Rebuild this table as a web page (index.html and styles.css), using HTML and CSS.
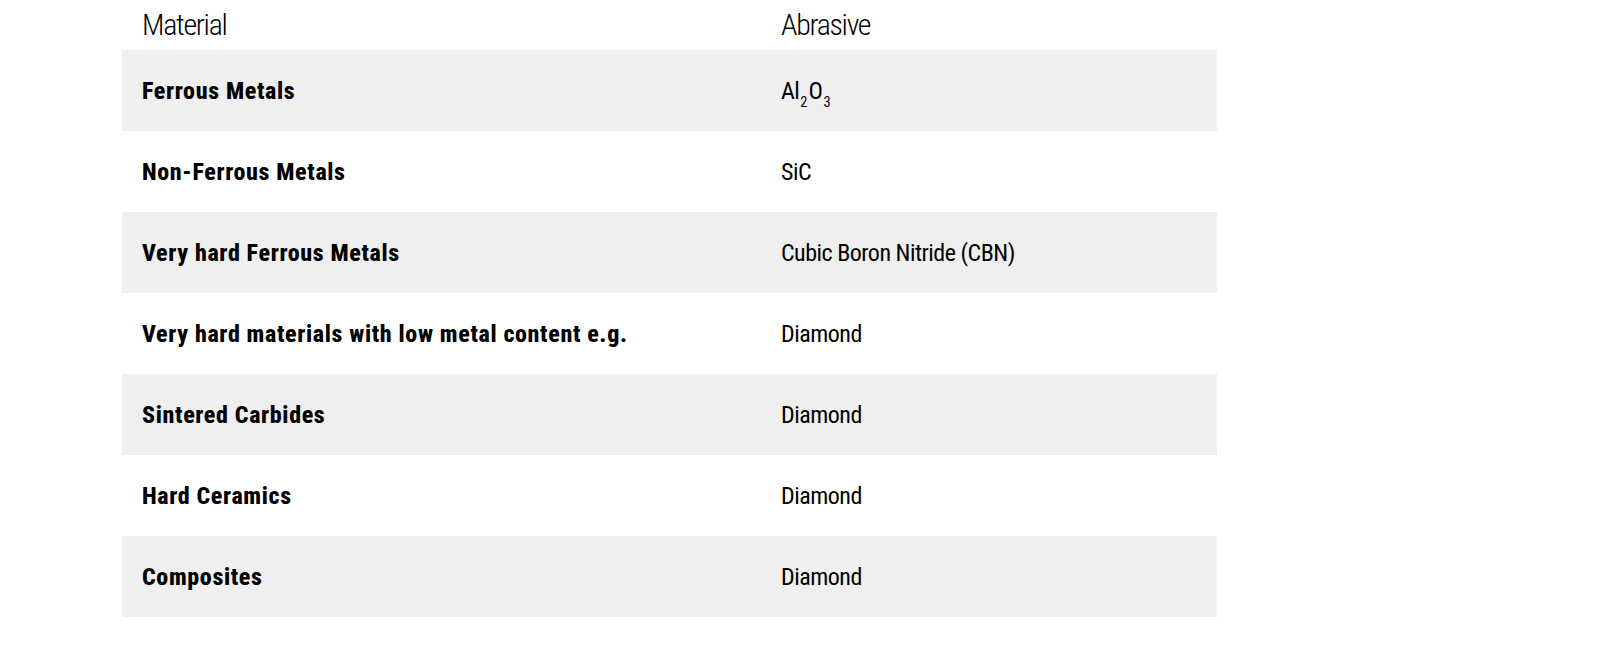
FILE: index.html
```html
<!DOCTYPE html>
<html lang="en">
<head>
<meta charset="utf-8">
<title>Materials and Abrasives</title>
<link rel="stylesheet" href="styles.css">
</head>
<body>
<table class="grid">
  <thead>
    <tr>
      <th class="col-mat">Material</th>
      <th class="col-abr">Abrasive</th>
    </tr>
  </thead>
  <tbody>
    <tr><td class="mat">Ferrous Metals</td><td class="abr">Al<sub>2</sub>O<sub>3</sub></td></tr>
    <tr><td class="mat">Non-Ferrous Metals</td><td class="abr">SiC</td></tr>
    <tr><td class="mat">Very hard Ferrous Metals</td><td class="abr">Cubic Boron Nitride (CBN)</td></tr>
    <tr><td class="mat">Very hard materials with low metal content e.g.</td><td class="abr">Diamond</td></tr>
    <tr><td class="mat">Sintered Carbides</td><td class="abr">Diamond</td></tr>
    <tr><td class="mat">Hard Ceramics</td><td class="abr">Diamond</td></tr>
    <tr><td class="mat">Composites</td><td class="abr">Diamond</td></tr>
  </tbody>
</table>
</body>
</html>
```

FILE: styles.css
```css
html, body {
  margin: 0;
  padding: 0;
  background: #ffffff;
}
body {
  font-family: "Roboto", "Liberation Sans", Arial, sans-serif;
  font-stretch: 75%;
  color: #000;
  padding: 0 0 0 122px;
}
.grid {
  width: 1095px;
  border-collapse: collapse;
  table-layout: fixed;
}
.col-mat { width: 599px; }
.grid th {
  text-align: left;
  font-weight: 300;
  font-size: 30px;
  letter-spacing: -1.3px;
  height: 50px;
  padding: 0 20px;
  vertical-align: middle;
  line-height: 50px;
}
.grid td {
  height: 81px;
  padding: 0 20px;
  vertical-align: middle;
  font-size: 24px;
  line-height: 28px;
}
.grid tbody tr:nth-child(odd) td {
  background: #efefef;
}
.mat {
  font-weight: 800;
  letter-spacing: 0.65px;
}
.abr {
  font-weight: 400;
  letter-spacing: -0.5px;
}
.abr sub {
  font-size: 60%;
  vertical-align: -0.6em;
  line-height: 0;
  letter-spacing: 0;
  margin: 0 1px 0 1px;
}
```
